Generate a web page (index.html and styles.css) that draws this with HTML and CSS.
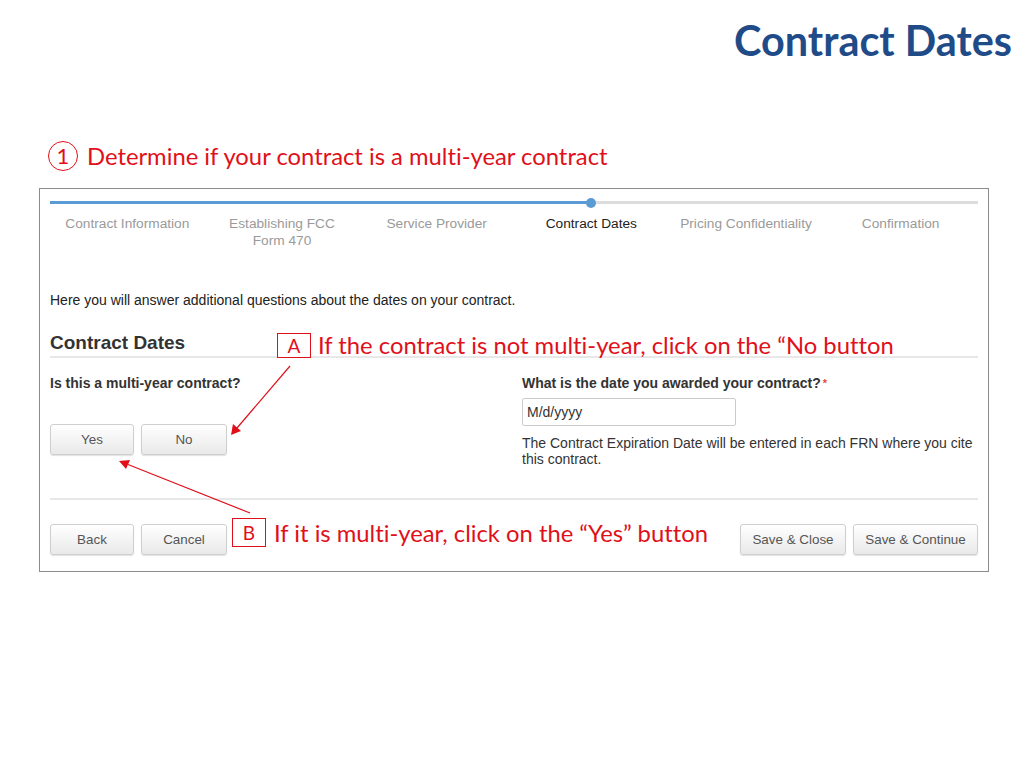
FILE: index.html
```html
<!DOCTYPE html>
<html lang="en">
<head>
<meta charset="utf-8">
<title>Contract Dates</title>
<link rel="stylesheet" href="styles.css">
</head>
<body>
<div class="slide">
  <h1 class="title">Contract Dates</h1>
  <div class="step"><span class="num">1</span><span class="step-text">Determine if your contract is a multi-year contract</span></div>

  <div class="shot">
    <div class="progress"><div class="fill"></div><div class="dot"></div></div>
    <div class="steps">
      <div class="st">Contract Information</div>
      <div class="st">Establishing FCC<br>Form 470</div>
      <div class="st">Service Provider</div>
      <div class="st active">Contract Dates</div>
      <div class="st">Pricing Confidentiality</div>
      <div class="st">Confirmation</div>
    </div>

    <p class="intro">Here you will answer additional questions about the dates on your contract.</p>
    <h2 class="section">Contract Dates</h2>

    <div class="form">
      <div class="col-left">
        <div class="label">Is this a multi-year contract?</div>
        <div class="btn-row yn">
          <button class="btn w84">Yes</button>
          <button class="btn w86">No</button>
        </div>
      </div>
      <div class="col-right">
        <div class="label">What is the date you awarded your contract?<span class="req">*</span></div>
        <div class="input">M/d/yyyy</div>
        <p class="help">The Contract Expiration Date will be entered in each FRN where you cite this contract.</p>
      </div>
    </div>

    <div class="divider"></div>

    <div class="footer">
      <div class="btn-row">
        <button class="btn w84">Back</button>
        <button class="btn w86">Cancel</button>
      </div>
      <div class="btn-row">
        <button class="btn w106">Save &amp; Close</button>
        <button class="btn w125">Save &amp; Continue</button>
      </div>
    </div>

    <div class="callout callout-a"><span class="tag">A</span><span class="note">If the contract is not multi-year, click on the “No button</span></div>
    <div class="callout callout-b"><span class="tag tall">B</span><span class="note">If it is multi-year, click on the “Yes” button</span></div>
  </div>

  <svg class="arrows" width="1024" height="768" viewBox="0 0 1024 768">
    <line x1="290" y1="366" x2="237" y2="428" stroke="#e0101a" stroke-width="1.2"/>
    <polygon points="231,435 233,424 241,431" fill="#e0101a"/>
    <line x1="250" y1="513" x2="128" y2="464.5" stroke="#e0101a" stroke-width="1.2"/>
    <polygon points="119,461 130,460 126,469" fill="#e0101a"/>
  </svg>
</div>
</body>
</html>
```

FILE: styles.css
```css
* { box-sizing: border-box; }
html, body { margin: 0; padding: 0; background: #fff; }
.slide {
  position: relative;
  width: 1024px;
  height: 768px;
  overflow: hidden;
  font-family: "Liberation Sans", Arial, sans-serif;
}
.title {
  margin: 0;
  padding: 16px 12px 0 0;
  text-align: right;
  font-family: Lato, "Open Sans", sans-serif;
  font-weight: 700;
  font-size: 41.4px;
  line-height: 48px;
  color: #1f4c88;
}
.step {
  display: flex;
  align-items: center;
  margin: 77px 0 0 48px;
  height: 30px;
  color: #e0101a;
  font-family: Lato, "Open Sans", sans-serif;
  font-size: 23.8px;
  font-variant-ligatures: none;
}
.num {
  display: inline-flex;
  align-items: center;
  justify-content: center;
  width: 30px;
  height: 30px;
  border: 1.5px solid #e0101a;
  border-radius: 50%;
  font-size: 22px;
  line-height: 1;
  margin-right: 9px;
}
.shot {
  position: relative;
  margin: 17px 0 0 39px;
  width: 950px;
  border: 1px solid #8c8c8c;
  padding: 12px 10px 16px 10px;
  color: #333;
  font-size: 14px;
}
.progress {
  position: relative;
  height: 3px;
  background: #dddddd;
}
.fill {
  width: 541px;
  height: 3px;
  background: #5b9bd5;
}
.dot {
  position: absolute;
  left: 536px;
  top: -3.5px;
  width: 10px;
  height: 10px;
  border-radius: 50%;
  background: #5b9bd5;
}
.steps {
  display: grid;
  grid-template-columns: repeat(6, 1fr);
  margin-top: 11px;
}
.st {
  text-align: center;
  color: #9a9a9a;
  line-height: 17px;
  font-size: 13.7px;
}
.st.active { color: #222; }
.intro {
  margin: 43px 0 0 0;
  line-height: 17px;
  color: #222;
}
.section {
  margin: 23px 0 0 0;
  padding-bottom: 2px;
  font-size: 19px;
  line-height: 22px;
  font-weight: 700;
  color: #333;
  border-bottom: 2px solid #e8e8e8;
}
.form {
  display: flex;
  margin-top: 17px;
}
.col-left { width: 472px; }
.col-right { flex: 1; }
.label {
  font-weight: 700;
  line-height: 17px;
  color: #333;
}
.req {
  color: #e8473c;
  font-size: 11px;
  vertical-align: top;
  margin-left: 2px;
}
.yn { margin-top: 32px; }
.btn-row { display: flex; gap: 7px; }
.btn {
  height: 31px;
  padding: 0;
  border: 1px solid #cfcfcf;
  border-radius: 3px;
  background: linear-gradient(#ffffff, #e9e9e9);
  box-shadow: 0 1px 1px rgba(0,0,0,0.12);
  font-family: "Liberation Sans", Arial, sans-serif;
  font-size: 13.4px;
  color: #555;
}
.w84 { width: 84px; }
.w86 { width: 86px; }
.w106 { width: 106px; }
.w125 { width: 125px; }
.input {
  margin-top: 6px;
  width: 214px;
  height: 28px;
  border: 1px solid #cccccc;
  border-radius: 2px;
  padding: 0 4px;
  line-height: 26px;
  color: #333;
}
.help {
  margin: 9px 0 0 0;
  line-height: 16px;
  color: #333;
  width: 452px;
}
.divider {
  margin-top: 31px;
  height: 2px;
  background: #e8e8e8;
}
.footer {
  display: flex;
  justify-content: space-between;
  margin-top: 24px;
}
.callout {
  position: absolute;
  display: flex;
  align-items: center;
  color: #e0101a;
  font-family: Lato, "Open Sans", sans-serif;
  font-size: 23.8px;
  font-variant-ligatures: none;
  white-space: nowrap;
}
.callout-a { left: 237px; top: 142px; }
.callout-b { left: 192px; top: 329px; }
.tag {
  display: inline-flex;
  align-items: center;
  justify-content: center;
  width: 34px;
  height: 25px;
  border: 1.5px solid #e0101a;
  font-size: 19px;
  margin-right: 7px;
  background: #fff;
}
.tag.tall { height: 29px; margin-right: 8px; }
.arrows {
  position: absolute;
  left: 0;
  top: 0;
  pointer-events: none;
}
```
